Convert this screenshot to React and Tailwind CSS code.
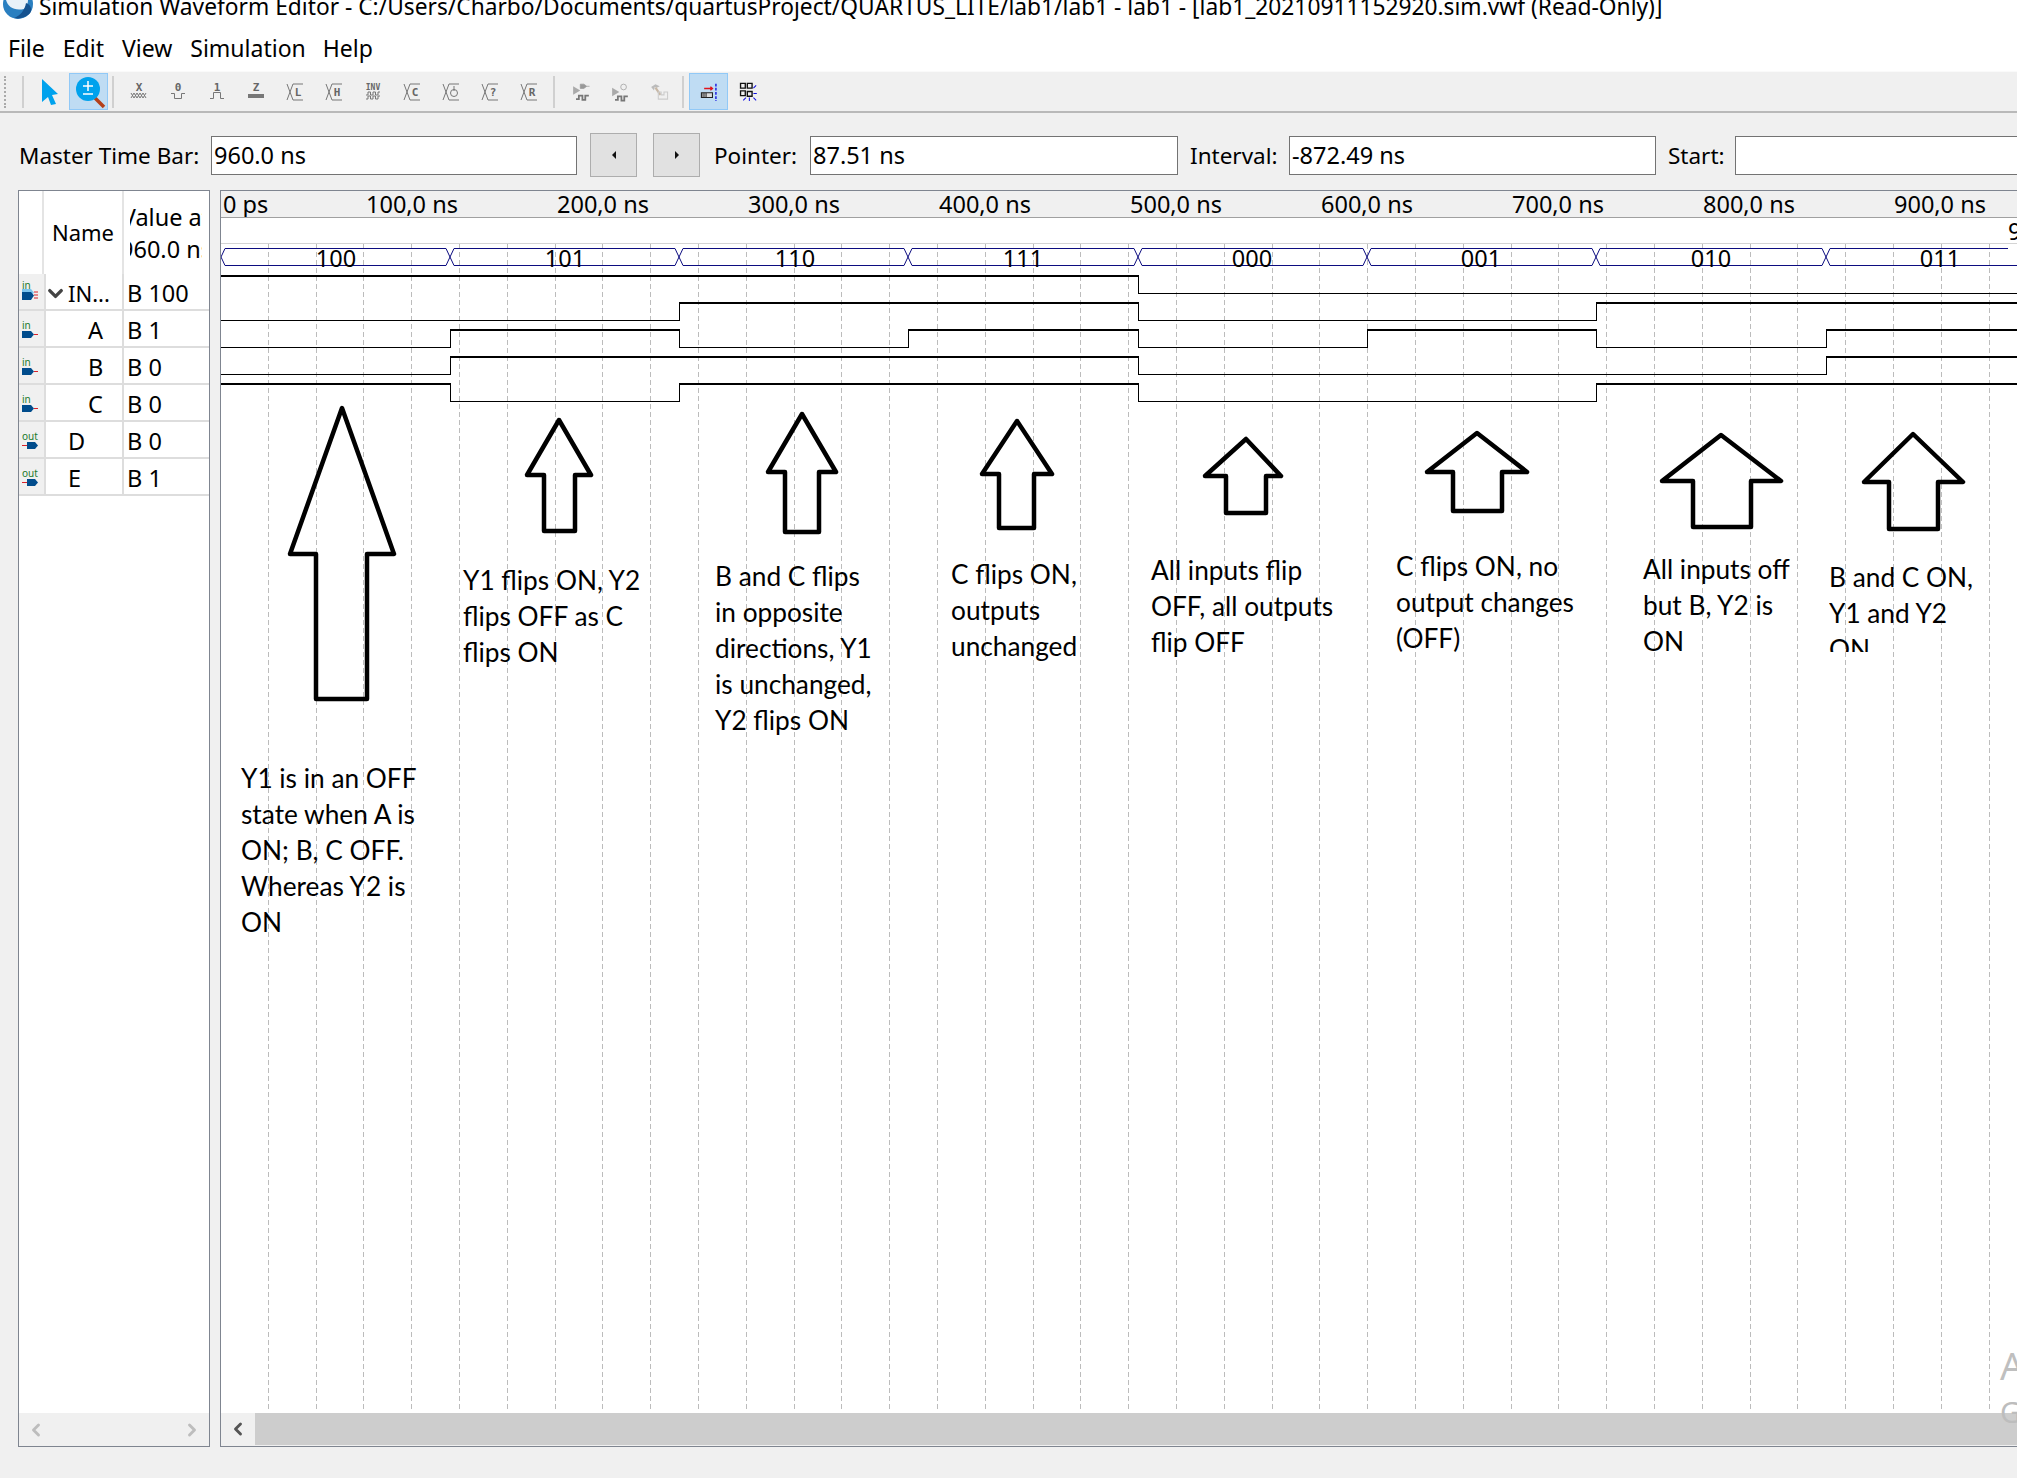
import { ChevronDown, ChevronLeft, ChevronRight } from "lucide-react";

const menuItems = [
  { label: "File", className: "" },
  { label: "Edit", className: "" },
  { label: "View", className: "" },
  { label: "Simulation", className: "" },
  { label: "Help", className: "-ml-[1px]" },
];
const rulerLabels = ["100,0 ns", "200,0 ns", "300,0 ns", "400,0 ns", "500,0 ns", "600,0 ns", "700,0 ns", "800,0 ns", "900,0 ns"];
const edges = [221, 450, 679, 908, 1138, 1367, 1596, 1826, 2055];
const busValues = ["100", "101", "110", "111", "000", "001", "010", "011"];
const busCenters = [336, 565, 795, 1023, 1252, 1481, 1711, 1940];
const gridLines = Array.from({ length: 38 }, (_, k) => Math.round(220 + 47.8 * k) + 0.5);

// one row per trace: high y, low y, level in each 80ns step
const traces = [
  { hi: 276, lo: 293, bits: [1, 1, 1, 1, 0, 0, 0, 0] },
  { hi: 303, lo: 320, bits: [0, 0, 1, 1, 0, 0, 1, 1] },
  { hi: 330, lo: 347, bits: [0, 1, 0, 1, 0, 1, 0, 1] },
  { hi: 357, lo: 374, bits: [0, 1, 1, 1, 0, 0, 0, 1] },
  { hi: 384, lo: 401, bits: [1, 0, 1, 1, 0, 0, 1, 1] },
];

const arrows = [
  "342,408 394,554 367,554 367,699 316,699 316,554 290,554",
  "559,420 591,475 575,475 575,531 544,531 544,475 527,475",
  "802,414 836,472 819,472 819,532 785,532 785,472 768,472",
  "1017,421 1052,474 1034,474 1034,528 999,528 999,474 982,474",
  "1246,439 1281,476 1266,476 1266,513 1226,513 1226,476 1205,476",
  "1477,433 1527,472 1502,472 1502,511 1453,511 1453,472 1427,472",
  "1721,435 1781,481 1751,481 1751,527 1693,527 1693,481 1662,481",
  "1913,434 1963,482 1938,482 1938,529 1889,529 1889,482 1864,482",
];

const rows = [
  { name: "A", value: "B 1", kind: "in", indent: "pl-[42px]" },
  { name: "B", value: "B 0", kind: "in", indent: "pl-[42px]" },
  { name: "C", value: "B 0", kind: "in", indent: "pl-[42px]" },
  { name: "D", value: "B 0", kind: "out", indent: "pl-[22px]" },
  { name: "E", value: "B 1", kind: "out", indent: "pl-[22px]" },
];

const monoText = { fontFamily: "DejaVu Sans Mono, monospace", fontWeight: 700 };

const PinIcon = ({ kind }) => (
  <svg width="24" height="35" className="flex-none">
    <text x="3" y="18" fontSize="10" fill="#1c7a2c" fontFamily="Noto Sans, sans-serif">{kind}</text>
    {kind === "in" ? (
      <>
        <path d="M3 20H12L15 23.5L12 27H3Z" fill="#004c8c" />
        <path d="M15 23.5H19" stroke="#d8232a" />
      </>
    ) : (
      <>
        <path d="M3 23.5H8" stroke="#d8232a" />
        <path d="M8 20H16L19 23.5L16 27H8Z" fill="#004c8c" />
      </>
    )}
  </svg>
);

const BusIcon = () => (
  <svg width="24" height="35" className="flex-none">
    <text x="3" y="15" fontSize="10" fill="#1c7a2c" fontFamily="Noto Sans, sans-serif">in</text>
    <path d="M3 15H12L15 18.500L12 22H3Z" fill="#7cc4ee" />
    <path d="M3 18H12L15 21.500L12 26H3Z" fill="#004c8c" />
    <path d="M15 18H19M15 21H19M15 24H19" stroke="#d8232a" />
  </svg>
);

// transition glyph used by the L, H, C, clock, ? and R buttons
const Crossing = ({ children }) => (
  <svg width="20" height="20" viewBox="0 0 20 20" fill="none" stroke="#777" strokeWidth="1">
    <path d="M2 2L8 18M8 2L2 18M8 2H18M8 18H18" />
    {children}
  </svg>
);

const GrayLabel = ({ x, y = 14, size = 11, children }) => (
  <text x={x} y={y} fontSize={size} textAnchor="middle" fill="#666" stroke="none" style={monoText}>{children}</text>
);

const toolIcons = [
  <svg width="20" height="20" fill="none" stroke="#777" key="x">
    <text x="10" y="9" fontSize="11" textAnchor="middle" fill="#666" stroke="none" style={monoText}>X</text>
    <path d="M2 11L5 16L8 11L11 16L14 11L17 16M2 16L5 11L8 16L11 11L14 16L17 11" />
  </svg>,
  <svg width="20" height="20" fill="none" stroke="#777" key="0">
    <text x="10" y="9" fontSize="11" textAnchor="middle" fill="#666" stroke="none" style={monoText}>0</text>
    <path d="M3 11.500H6.500V16.500H13.500V11.500H17" />
  </svg>,
  <svg width="20" height="20" fill="none" stroke="#777" key="1">
    <text x="10" y="9" fontSize="11" textAnchor="middle" fill="#666" stroke="none" style={monoText}>1</text>
    <path d="M3 16.500H6.500V10.500H13.500V16.500H17" />
  </svg>,
  <svg width="20" height="20" key="z">
    <text x="10" y="9" fontSize="11" textAnchor="middle" fill="#666" style={monoText}>Z</text>
    <rect x="2" y="12" width="16" height="4" fill="#777" />
  </svg>,
  <Crossing key="l"><GrayLabel x="13">L</GrayLabel></Crossing>,
  <Crossing key="h"><GrayLabel x="13">H</GrayLabel></Crossing>,
  <svg width="20" height="20" fill="none" stroke="#777" key="inv">
    <text x="10" y="8" fontSize="8" textAnchor="middle" fill="#666" stroke="none" style={monoText}>INV</text>
    <path d="M3 13H5V10H7.500V13H10V10H12.500V13H15V10H17M3 17H5V14H7.500V17H10V14H12.500V17H15V14H17" />
  </svg>,
  <Crossing key="c"><GrayLabel x="13">C</GrayLabel></Crossing>,
  <Crossing key="clock">
    <circle cx="13" cy="11" r="3.500" />
    <path d="M13 4V9" />
  </Crossing>,
  <Crossing key="q"><GrayLabel x="13">?</GrayLabel></Crossing>,
  <Crossing key="r"><GrayLabel x="13">R</GrayLabel></Crossing>,
];

const simIcons = [
  <svg width="20" height="20" viewBox="0 0 28 28" fill="none" key="a">
    <path d="M3 6L13 12L3 18Z" fill="#aaa" />
    <path d="M13 3H18L22 6L18 9H13ZM22 6H26" fill="#999" stroke="#999" />
    <path d="M7 24H11V19H16V25H20V19H25" stroke="#777" strokeWidth="2.500" />
  </svg>,
  <svg width="20" height="20" viewBox="0 0 28 28" fill="none" key="b">
    <path d="M3 8L13 14L3 20Z" fill="#aaa" />
    <circle cx="19" cy="7" r="4" stroke="#999" />
    <path d="M7 25H11V20H16V26H20V20H25" stroke="#777" strokeWidth="2.500" />
  </svg>,
  <svg width="20" height="20" viewBox="0 0 28 28" fill="none" key="c">
    <path d="M3 7L9 3L15 6L11 8L8 7L7 12Z" fill="#bbb" />
    <path d="M9 8L16 18" stroke="#c7b7a5" strokeWidth="3" />
    <path d="M13 24V14H17V18H21V14H26V24Z" stroke="#ccc" strokeWidth="1.500" />
  </svg>,
];

const Sep = ({ className }) => <div className={`w-[2px] h-[32px] flex-none bg-[#d0d0d0] ${className}`} />;

const Toolbar = () => (
  <div className="h-[42px] -mt-[1px] flex-none flex items-center bg-[#f0f0f0] border-t border-t-[#fafafa] border-b-2 border-b-[#b9b9b9] pl-[4px]">
    <div className="w-[3px] h-[32px] flex-none border-l-2 border-dotted border-[#aaa]" />
    <Sep className="ml-[15px]" />
    <div className="w-[39px] h-[37px] flex-none ml-[6px] flex items-center justify-center">
      <svg width="20" height="27"><path d="M2 1L18 16L12 17L16 26L11 27L8 19L2 24Z" fill="#00a2ed" /></svg>
    </div>
    <div className="w-[39px] h-[37px] flex-none bg-[#bfdcf3] border border-[#91c9f7] flex items-center justify-center">
      <svg width="36" height="35">
        <path d="M24 24L33 33" stroke="#b5401a" strokeWidth="3.500" />
        <circle cx="17" cy="15" r="12" fill="#00a2ed" />
        <path d="M12 12H22M17 7V17M12 20H22" stroke="#fff" strokeWidth="1.500" />
      </svg>
    </div>
    <Sep className="ml-[4px]" />
    <div className="flex ml-[5px]">
      {toolIcons.map((icon, i) => (
        <div key={i} className="w-[39px] h-[37px] flex items-center justify-center">{icon}</div>
      ))}
    </div>
    <Sep className="ml-[5px]" />
    <div className="flex ml-[6px]">
      {simIcons.map((icon, i) => (
        <div key={i} className="w-[39px] h-[37px] flex items-center justify-center">{icon}</div>
      ))}
    </div>
    <Sep className="ml-[4px]" />
    <div className="w-[39px] h-[37px] flex-none ml-[5px] bg-[#bfdcf3] border border-[#91c9f7] flex items-center justify-center">
      <svg width="18" height="18" viewBox="0 0 26 26" fill="none">
        <path d="M6 8H18M15 5.500L18 8L15 10.500" stroke="#e0141c" strokeWidth="2" />
        <path d="M2 14H18V21H2Z" fill="#ddd" stroke="#222" strokeWidth="1.500" />
        <path d="M2 17.500H11" stroke="#222" strokeDasharray="1.500 1.500" strokeWidth="6" />
        <path d="M23 1V26" stroke="#1010e0" strokeWidth="2" strokeDasharray="4 2" />
      </svg>
    </div>
    <div className="w-[39px] h-[37px] flex-none flex items-center justify-center">
      <svg width="18" height="19" viewBox="0 0 26 28" fill="none">
        <path d="M2 2H9V9H2ZM12 2H19V9H12ZM2 13H9V20H2ZM12 14H19V21H12Z" stroke="#111" strokeWidth="2" />
        <path d="M25 5L21 9M21 17H26M21 23L25 27M15 23V28M10 23L6 27" stroke="#1010e0" strokeWidth="1.500" />
      </svg>
    </div>
  </div>
);

const Field = ({ value, width }) => (
  <div className={`h-[39px] flex-none bg-white border border-[#737373] px-[2px] pt-[2px] flex items-center text-[23.5px] ${width}`}>{value}</div>
);

const StepButton = ({ d, className }) => (
  <div className={`w-[47px] h-[44px] flex-none bg-[#e1e1e1] border border-[#adadad] flex items-center justify-center ${className}`}>
    <svg width="6" height="8"><path d={d} fill="#111" /></svg>
  </div>
);

const TimeBar = () => (
  <div className="h-[77px] flex-none flex items-center text-[22.5px] pl-[19px] whitespace-nowrap pt-[7px]">
    <span className="w-[192px] flex-none pt-[2px]">Master Time Bar:</span>
    <Field value="960.0 ns" width="w-[366px]" />
    <StepButton d="M5 0V8L1 4Z" className="ml-[13px]" />
    <StepButton d="M1 0V8L5 4Z" className="ml-[16px]" />
    <span className="w-[96px] flex-none ml-[14px] pt-[2px]">Pointer:</span>
    <Field value="87.51 ns" width="w-[368px]" />
    <span className="w-[99px] flex-none ml-[12px] pt-[2px]">Interval:</span>
    <Field value="-872.49 ns" width="w-[367px]" />
    <span className="w-[67px] flex-none ml-[12px] pt-[2px]">Start:</span>
    <Field value="" width="w-[400px]" />
  </div>
);

const SignalList = () => (
  <div className="w-[192px] flex-none flex flex-col bg-white border border-[#7f8590]">
    <div className="h-[83px] flex-none flex">
      <div className="w-[25px] flex-none border-r-2 border-[#e4e4e4]" />
      <div className="w-[80px] flex-none border-r-2 border-[#e4e4e4] flex items-center justify-center text-[22px]">Name</div>
      <div className="flex-1 flex flex-col justify-center items-center overflow-hidden ml-[6px] mr-[7px] text-[23.5px] leading-[32px] whitespace-nowrap">
        <span>Value at</span>
        <span>960.0 ns</span>
      </div>
    </div>
    <div className="h-[37px] flex-none flex text-[23.5px]">
      <div className="w-[25px] flex-none bg-[#f0f0f0] border-b-2 border-[#ddd]"><BusIcon /></div>
      <div className="w-[80px] flex-none border-x-2 border-b-2 border-[#ddd] flex items-center text-[22px] pt-[4px]">
        <ChevronDown size={23} strokeWidth={3.5} className="text-[#444] flex-none -ml-[2px]" />
        <span className="ml-[1px]">IN...</span>
      </div>
      <div className="flex-1 border-b-2 border-[#ddd] flex items-center pl-[3px] pt-[4px]">B 100</div>
    </div>
    {rows.map((row) => (
      <div key={row.name} className="h-[37px] flex-none flex text-[23.5px]">
        <div className="w-[25px] flex-none bg-[#f0f0f0] border-b-2 border-[#ddd]"><PinIcon kind={row.kind} /></div>
        <div className={`w-[80px] flex-none border-x-2 border-b-2 border-[#ddd] flex items-center pt-[4px] ${row.indent}`}>{row.name}</div>
        <div className="flex-1 border-b-2 border-[#ddd] flex items-center pl-[3px] pt-[4px]">{row.value}</div>
      </div>
    ))}
    <div className="flex-1" />
    <div className="h-[33px] flex-none bg-[#f0f0f0] flex items-center justify-between px-[7px] text-[#bdbdbd]">
      <ChevronLeft size={20} strokeWidth={3.5} />
      <ChevronRight size={20} strokeWidth={3.5} />
    </div>
  </div>
);

const Waveforms = () => (
  <svg className="absolute inset-0" width="1796" height="1195" viewBox="221 218 1796 1195" fill="none">
    <path d="M221 243.500H2017" stroke="#d4d4d4" />
    {gridLines.map((x) => (
      <path key={x} d={`M${x} 244V1412`} stroke="#bcbcbc" strokeDasharray="5 3" />
    ))}

    {/* bus value */}
    {busValues.map((value, i) => {
      const a = edges[i];
      const b = edges[i + 1];
      const right = Math.min(b - 4, 2008);
      return (
        <g key={value}>
          <path d={`M${a + 4} 248.500H${right}`} stroke="#0c0c80" />
          <path d={`M${a + 4} 265.500H${b - 4}`} stroke="#0c0c80" />
          <path d={`M${a + 4} 248.500L${a} 257L${a + 4} 265.500`} stroke="#0c0c80" />
          <path d={`M${b - 4} 248.500L${b} 257L${b - 4} 265.500`} stroke="#0c0c80" />
          <text x={busCenters[i]} y="267" textAnchor="middle" fontSize="23.5" fill="#000" fontFamily="Noto Sans, sans-serif">{value}</text>
        </g>
      );
    })}
    <text x="2008" y="240" fontSize="23.5" fill="#000" fontFamily="Noto Sans, sans-serif">960.0 ns</text>

    {/* inputs and outputs */}
    {traces.map((t) =>
      t.bits.map((bit, i) => {
        const x1 = edges[i];
        const x2 = Math.min(edges[i + 1], 2017);
        const y = bit ? t.hi : t.lo + 0.5;
        const next = t.bits[i + 1];
        return (
          <g key={`${t.hi}-${i}`}>
            <path d={`M${x1} ${y}H${x2 + 1}`} stroke="#000" strokeWidth={bit ? 2 : 1} />
            {next !== undefined && next !== bit && <path d={`M${x2 + 0.5} ${t.hi}V${t.lo + 1}`} stroke="#000" />}
          </g>
        );
      })
    )}

    {arrows.map((points) => (
      <polygon key={points} points={points} stroke="#000" strokeWidth="4.500" strokeLinejoin="round" />
    ))}
  </svg>
);

const noteClass = "absolute font-['Lato',sans-serif] text-[26.25px] leading-[36px] whitespace-nowrap";

const Notes = () => (
  <>
    <div className={`${noteClass} left-[20px] top-[542px]`}>Y1 is in an OFF<br />state when A is<br />ON; B, C OFF.<br />Whereas Y2 is<br />ON</div>
    <div className={`${noteClass} left-[242px] top-[344px]`}>Y1 flips ON, Y2<br />flips OFF as C<br />flips ON</div>
    <div className={`${noteClass} left-[494px] top-[340px]`}>B and C flips<br />in opposite<br />directions, Y1<br />is unchanged,<br />Y2 flips ON</div>
    <div className={`${noteClass} left-[730px] top-[338px]`}>C flips ON,<br />outputs<br />unchanged</div>
    <div className={`${noteClass} left-[930px] top-[334px]`}>All inputs flip<br />OFF, all outputs<br />flip OFF</div>
    <div className={`${noteClass} left-[1175px] top-[330px]`}>C flips ON, no<br />output changes<br />(OFF)</div>
    <div className={`${noteClass} left-[1422px] top-[333px]`}>All inputs off<br />but B, Y2 is<br />ON</div>
    <div className={`${noteClass} left-[1608px] top-[341px] h-[93px] overflow-hidden`}>B and C ON,<br />Y1 and Y2<br />ON</div>
  </>
);

const WavePanel = () => (
  <div className="flex-1 min-w-0 flex flex-col bg-white border-l border-y border-[#7f8590]">
    <div className="h-[27px] flex-none flex items-center bg-[#f0f0f0] border-b border-[#a0a0a0] pt-[2px] text-[23.5px] whitespace-nowrap overflow-hidden">
      <span className="w-[145px] flex-none pl-[2px]">0 ps</span>
      {rulerLabels.map((label) => (
        <span key={label} className="w-[191px] flex-none">{label}</span>
      ))}
    </div>
    <div className="flex-1 relative overflow-hidden">
      <Waveforms />
      <Notes />
    </div>
    <div className="h-[33px] flex-none flex bg-[#f0f0f0] pb-[1px]">
      <div className="w-[34px] flex-none flex items-center justify-center text-[#555]">
        <ChevronLeft size={20} strokeWidth={3.5} />
      </div>
      <div className="flex-1 bg-[#cdcdcd]" />
    </div>
  </div>
);

export default function App() {
  return (
    <div className="relative w-[2017px] h-[1478px] overflow-hidden flex flex-col bg-[#f0f0f0] text-black font-['Noto_Sans',sans-serif]">
      <div className="h-[24px] flex-none bg-white flex overflow-hidden">
        <svg width="36" height="20" className="flex-none">
          <circle cx="18" cy="4" r="15" fill="#2a7fc0" />
          <path d="M6 0C8 7 14 11 24 9C27 6 28 3 28 0Z" fill="#e8f1f8" />
          <path d="M26 3C32 5 33 12 28 15C24 18 18 19 14 18C20 16 25 10 26 3Z" fill="#15528f" />
        </svg>
        <div className="ml-[3px] -mt-[1px] text-[22.75px] leading-[16px] whitespace-nowrap">
          Simulation Waveform Editor - C:/Users/Charbo/Documents/quartusProject/QUARTUS_LITE/lab1/lab1 - lab1 - [lab1_20210911152920.sim.vwf (Read-Only)]
        </div>
      </div>
      <div className="h-[48px] flex-none bg-white flex items-center gap-[18px] pl-[8px] text-[23px]">
        {menuItems.map((item) => (
          <span key={item.label} className={item.className}>{item.label}</span>
        ))}
      </div>
      <Toolbar />
      <TimeBar />
      <div className="h-[1257px] flex-none flex pl-[18px] gap-[10px]">
        <SignalList />
        <WavePanel />
      </div>
      <div className="absolute left-[2000px] top-[1340px] text-[38px] leading-[50px] text-[#bfbfbf] whitespace-nowrap">Activate Windows</div>
      <div className="absolute left-[2000px] top-[1393px] text-[29px] leading-[38px] text-[#bdbdbd] whitespace-nowrap">Go to Settings to activate Windows.</div>
    </div>
  );
}
